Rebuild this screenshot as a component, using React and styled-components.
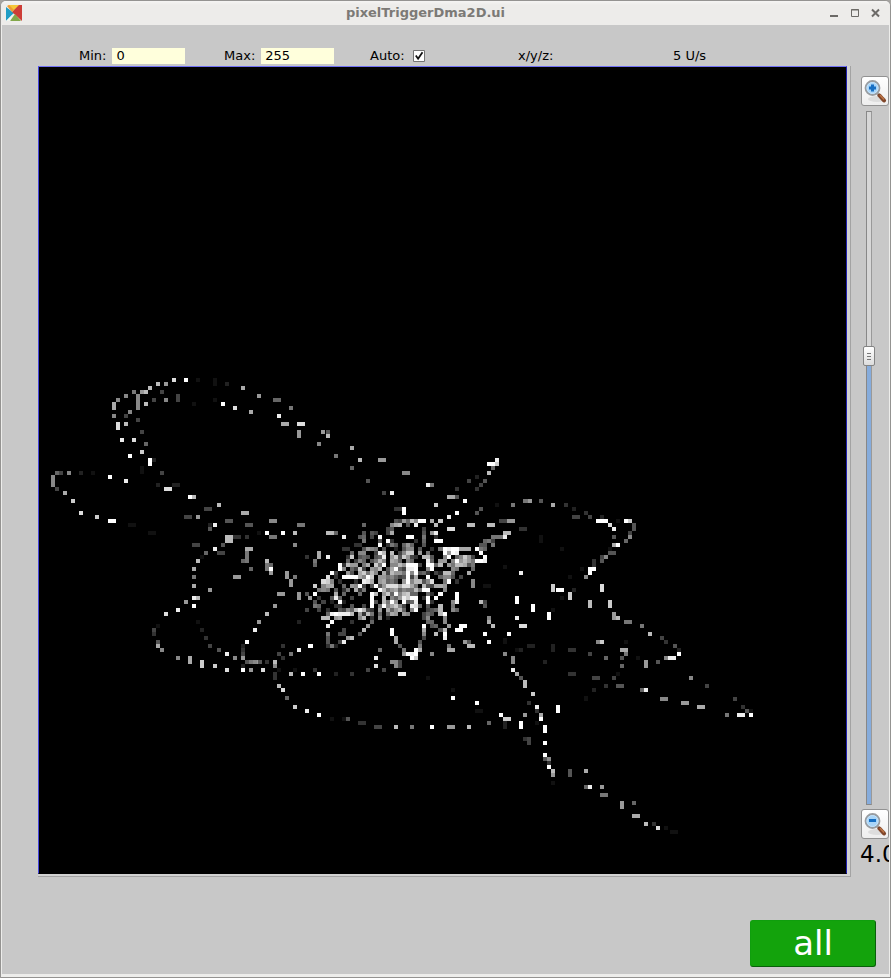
import React from "react";
import styled, { createGlobalStyle } from "styled-components";

const GlobalStyle = createGlobalStyle`
  * { box-sizing: border-box; }
  body { margin: 0; background: #a5a3a0; overflow: hidden; }
`;

const Window = styled.div`
  width: 891px;
  height: 978px;
  display: flex;
  flex-direction: column;
  overflow: hidden;
  background: #ededeb;
  border: 1px solid #949391;
  border-radius: 6px 6px 0 0;
  font: 13px/16px "DejaVu Sans", sans-serif;
  color: #000;
`;

const TitleBar = styled.header`
  flex: 0 0 24px;
  display: grid;
  grid-template-columns: 75px 1fr 116px;
  background: linear-gradient(#f5f4f3, #edecea 4px);
`;

const AppIcon = styled.svg`
  width: 16px;
  height: 16px;
  margin: 4px 0 0 5px;
`;

const Title = styled.h1`
  margin: 4px 0 0;
  padding-left: 1px;
  text-align: center;
  font-size: 13px;
  line-height: 16px;
  font-weight: bold;
  color: #7c7a76;
`;

const WindowButtons = styled.svg`
  width: 54px;
  height: 16px;
  margin: 4px 0 0 54px;
`;

const Client = styled.main`
  height: 949px;
  margin: 0 1px 0 1px;
  display: flex;
  flex-direction: column;
  background: #c8c8c8;
  overflow: hidden;
`;

const Toolbar = styled.div`
  flex: 0 0 41px;
  padding-top: 23px;
  display: grid;
  grid-template-columns: 77px 145px 146px 148px 155px 1fr;
`;

const Field = styled.label`
  display: flex;
  align-items: flex-start;
  height: 16px;
  line-height: 15px;
  white-space: nowrap;
`;

const Input = styled.input`
  width: 73px;
  height: 16px;
  margin: 0 0 0 6px;
  padding: 0 0 1px 4px;
  border: 0;
  outline: 0;
  border-radius: 0;
  background: #ffffdc;
  color: #000;
  font: 13px/15px "DejaVu Sans", sans-serif;
`;

const CheckMark = styled.svg`
  width: 12px;
  height: 12px;
  margin: 2px 0 0 8px;
`;

const Content = styled.section`
  display: flex;
  height: 812px;
  padding-left: 36px;
`;

const Frame = styled.div`
  width: 813px;
  height: 811px;
  border-right: 1px solid #a3a3a3;
  border-bottom: 1px solid #a3a3a3;
  background: #d2d2d2;
`;

const Image = styled.div`
  width: 809px;
  height: 808px;
  border: 1px solid #2020b0;
  border-top-color: #7070f4;
  border-left-color: #4444dd;
  border-bottom-color: #000;
  background: #000;
`;

const Plot = styled.svg`
  display: block;
  width: 807px;
  height: 806px;
`;

const ZoomPanel = styled.aside`
  flex: 1;
  display: flex;
  flex-direction: column;
  align-items: flex-start;
  padding: 10px 0 0 10px;
  overflow: hidden;
`;

const ZoomButton = styled.button`
  flex: 0 0 30px;
  width: 28px;
  padding: 0 0 0 1px;
  border: 1px solid #929292;
  border-radius: 3px;
  background: linear-gradient(#fff, #eee);
  svg { display: block; width: 24px; height: 24px; }
`;

const Track = styled.div`
  flex: 0 0 694px;
  width: 6px;
  margin: 5px 0 4px 5px;
  display: flex;
  flex-direction: column;
  align-items: center;
  border: 1px solid #888;
  border-right-color: #999;
  background: #d7d7d7;
`;

const Handle = styled.div`
  flex: 0 0 20px;
  width: 12px;
  margin-top: 234px;
  padding: 6px 2px 0;
  border: 1px solid #848484;
  border-radius: 2px;
  background: linear-gradient(#fff, #ddd);
  &::before {
    content: "";
    display: block;
    height: 7px;
    margin: 0 1px;
    background: repeating-linear-gradient(#777 0 1px, transparent 1px 3px);
  }
`;

const Filled = styled.div`
  flex: 1;
  width: 4px;
  background: #86acdc;
`;

const ZoomValue = styled.output`
  margin-top: 2px;
  margin-left: -1px;
  font-size: 23px;
  line-height: 27px;
  white-space: nowrap;
`;

const Footer = styled.footer`
  display: flex;
  justify-content: flex-end;
  padding: 42px 13px 0 0;
`;

const AllButton = styled.button`
  width: 126px;
  height: 47px;
  padding: 0 0 1px;
  border: 1px solid #0f9e0d;
  border-right-color: #08600a;
  border-bottom-color: #08600a;
  border-radius: 3px;
  background: #13a30c;
  color: #fff;
  font: 34px/40px "DejaVu Sans", sans-serif;
`;

/* Each patch lists samples as "x,y,level[,columns,rows]". Coordinates are
   centres in thirds of a pixel from the patch origin; levels are hex digits. */
const patches = [
  [40, 370, `402,30,d 438,30,f 354,42,b 378,42,9 330,54,b 282,66,7 306,66,9 318,66,b 366,66,4 258,78,8 294,78,8,1,4
   234,90,8 222,102,a,1,2 318,102,b 342,90,4 378,90,8 414,78,4,1,2 270,126,8 258,138,4 222,138,8 294,150,4
   234,162,d,1,2 258,162,b 306,186,4 246,210,e 282,210,d 318,222,6 306,246,c 270,258,f 330,270,f,1,2 342,270,2
   306,294,1,1,2 51,309,6 63,309,4 87,309,8 123,309,2 159,309,1 39,321,8,1,3 51,357,4 75,369,a 99,393,c
   123,429,d 171,441,c 210,453,f,2,1 210,321,f 258,333,e 366,309,4 354,345,2 402,345,2,2,1 378,357,d,2,1
   450,381,f 462,381,b 537,405,b 498,417,4,2,1 438,441,4,2,1 474,441,a 561,453,6,2,1 525,465,e 510,465,2
   510,477,6 525,30,1,1,2 561,42,2 462,102,1 525,90,1 549,102,f 585,114,c 270,465,1,2,1 474,30,1`],
  [230, 370, `39,54,a 87,78,9 15,114,d 63,126,a 135,90,6,2,1 183,114,7 147,138,e 159,162,a,2,1 207,162,d,2,1
   207,186,9,1,2 279,186,9 294,186,5 294,198,b 267,222,8 318,258,7 366,234,a 390,270,b 450,270,9,2,1 366,295,6
   414,333,5 462,369,4 486,369,e 522,309,8,2,1 594,345,f 498,417,3,2,1 522,417,f,1,2 39,429,9,2,1 123,453,7,2,1`],
  [140, 500, `237,15,b 199,27,4,2,1 309,39,a,2,1 138,51,4,2,1 174,51,9 261,63,5,2,1 225,75,e 211,87,5 321,75,5,2,1
   393,63,8,2,1 477,75,7,2,1 30,99,1,2,1 357,99,1 381,99,f 429,99,f 465,99,b 393,111,7,2,1 261,111,b,2,2
   285,111,3,2,1 321,111,3 162,135,4,2,1 249,135,5 225,147,e 198,159,6 237,159,4,2,1 186,171,1 321,147,a,2,1
   321,159,7,1,3 309,183,6 465,135,8 501,171,4 174,183,b 162,207,a 162,231,7 162,258,a 162,294,e 174,294,b
   162,318,f 211,270,9 138,306,9 114,330,e 78,342,d 333,207,6 285,231,9,2,1 381,183,b 381,195,7,1,2 393,195,6
   393,207,f 393,219,9 441,219,9,1,2 465,231,7 453,243,9,1,2 417,282,9,2,1 477,282,9,1,2 501,282,5 510,294,9
   405,318,9 381,342,b 501,330,5 477,366,2 357,366,9 345,390,e 321,426,f 174,366,1 186,390,2 198,414,3
   54,378,1 42,390,4 42,402,3 54,426,5 54,438,a 66,450,8 211,438,4 237,450,5 261,462,e 285,474,8 309,438,2
   309,450,3 309,462,4 309,474,9 114,474,8 150,474,a,1,2 186,486,c,1,2 225,498,c 261,510,d 309,498,2 309,510,f
   321,486,5 333,486,7 345,486,8 357,486,9 333,510,9 369,510,a 381,486,3 405,486,a,1,2 405,522,3,1,2
   429,438,4 417,462,6 429,474,3 453,462,7 477,450,e 510,438,f 417,510,1 465,510,1 453,522,a 489,522,f`],
  [410, 450, `261,30,e 237,42,f 249,42,f 261,42,c 249,54,6 237,69,b 201,81,2 177,93,4 225,93,5 54,105,e 66,105,7
   213,105,4 141,117,3 201,117,3 117,141,a,2,1 141,141,5 165,153,f 78,165,c 309,165,7 261,165,1 213,177,5
   201,189,5 141,189,f 117,201,e 345,153,7,2,1 297,213,9,2,1 273,213,4,2,1 333,237,3,2,1 177,225,b,2,1
   237,225,b,2,1 333,369,e 285,351,1 225,408,1,2,1 321,444,f,1,2 321,504,e 369,468,f,1,2 333,528,d,2,1
   297,552,f 285,570,1 285,612,7 309,624,9 321,600,2 333,600,3 357,588,2,2,1 237,504,8 237,516,a 249,528,b
   225,552,f 237,576,f 213,456,b 225,456,4 225,468,5 189,393,8 189,405,8 165,576,8 177,576,5 177,588,b,2,1`],
  [530, 490, `0,33,9 33,33,5 69,45,a 108,45,3 132,57,2 168,69,3 132,81,4,2,1 180,81,4 216,81,2 204,93,f,3,1 240,105,d
   252,117,e 252,141,5 264,93,1 288,93,f 300,93,c 312,105,5,1,2 300,129,4 300,141,8 288,153,6 252,165,a
   264,165,f 240,177,1 240,189,5,2,1 228,201,8 216,201,4 216,213,5 192,213,3,1,2 180,237,f 192,237,f
   180,249,f 168,261,8 156,237,1 33,141,1,1,2 96,177,1 120,261,1 69,288,c,1,2 84,300,f,2,1 132,300,2
   216,288,d,1,2 96,324,1 120,312,c,1,2 180,336,b,1,2 240,336,c,1,2 9,348,f,1,2 57,372,f,1,2 69,360,1
   252,372,9,1,2 264,384,b 288,396,7,2,1 336,408,7 360,432,b 396,444,4 408,456,3 435,468,5 447,480,2
   447,492,f 408,504,8 420,504,e,2,1 384,516,5 348,516,9,1,2 324,504,1 204,456,8 216,456,c 288,456,1
   276,480,a,2,1 288,492,7 276,504,5 276,528,6 180,492,4 228,504,6 69,468,3,1,2 120,480,4,2,1 45,516,1
   6,468,1 120,552,3,2,1 192,564,4,2,1 252,564,4 264,552,1 228,588,3 264,588,5,2,1 192,600,2 168,626,1
   336,600,6 348,600,e 396,626,8,2,1 459,639,9,2,1 507,651,a,2,1 483,564,8 531,588,4 615,626,4 639,651,3
   651,663,5 663,675,f 627,675,e,2,1 591,675,7 663,663,1 84,651,f,1,2`],
  [260, 640, `69,18,3 117,30,e 153,18,f 93,42,7 57,42,4 69,54,3 45,66,b 45,78,8 9,90,d 0,66,5 21,66,3 45,102,3,1,2
   57,138,b 69,150,d 81,175,6 105,201,c 141,213,e 177,225,f 93,102,b 105,90,1 129,102,e 165,90,3 177,102,f
   228,102,1 276,102,2 324,90,6 372,90,4 348,54,e 348,78,e 360,30,7 204,18,7 216,18,3 228,18,2 252,6,f
   216,237,1 252,237,1 264,237,5 300,249,3,2,1 348,261,4,2,1 408,261,b 456,261,7 516,261,f 567,261,9,2,1
   627,261,b 687,249,6 723,225,f 735,237,c,2,1 735,249,2,1,2 783,249,f,1,2 795,225,9 795,297,3 807,297,4,1,2
   504,114,1 578,150,1 579,175,f 651,189,f 651,213,1,2,1 420,102,e,2,1 408,66,8,1,2 420,66,4,1,2
   408,6,b 420,18,4 432,30,8,1,2 444,42,c 456,54,f 468,30,f,1,2 480,18,b,1,2 468,54,6 516,42,8
   567,18,8 567,30,b,2,1 615,6,9 627,18,b,2,1 687,6,f 735,42,8 759,54,8,1,2 759,90,e 771,102,a 783,114,5
   795,126,b,1,2 819,162,c 807,189,3 831,201,e 831,213,3 843,225,a 843,237,f 831,249,1 855,261,f,1,2
   855,309,f 855,345,f 855,357,5 867,357,8 867,369,3 867,381,f 880,393,b 880,405,9 880,429,1
   894,201,f,1,2 930,393,5,1,2 978,393,a 978,441,6 990,441,e 1026,441,9 1026,465,7,2,1 1086,489,9,1,2
   1122,489,6 1122,528,a,2,1 1158,552,b 1182,552,3 1194,564,d 1218,564,1 1236,576,1,2,1
   735,6,1 771,30,1 783,30,2 808,18,2,2,1 855,66,2 880,18,2,1,2 930,30,3,2,1 930,102,3,2,1 978,175,1`],
];

/* The dense core is stored row by row: a dot is an empty cell. */
const coreLeft = [
  ".......................33f...",
  ".........................f...",
  ".............................",
  ".......................549678",
  "0..............6......8ab.5.e",
  ".....................45......",
  "......bb6......5.54..4a......",
  "..........e...56.4.f......ff.",
  "...............7...5.f3.....3",
  ".............33....f.375.695.",
  "..........33...5987.5..2.588.",
  "....a.......6.88..4eb.b.48c4.",
  ".3..a.e....3c.565.56e.9c5c943",
  "...7.......6.486.57b8.a96.8..",
  "...6.....f3b99.7a.c7f.88b9fdf",
  ".........f8.64c4.98b.5af64e9f",
  ".......f4..95.ac7b8.a4b997f89",
  "......d.3.ffffa8fc.9978645f6b",
  ".....dc8.3...3.eda.9a675.9f9c",
  "...c.8aa..6.98f4.5f59dddaddc.",
  "....787.5.37.a37...fb79a687b4",
  "...f....a.6...6..fb.9c6f8bc79",
  "....3..5e6..4....f..b.869ecff",
  "...5.4.2.f2......f5.b7f9.f59e",
  "...76...33..5..4.f.7f8ac84.9a",
  ".4..4.3..5486beb43.9.a69b6.8f",
  "......6efeeeb.93b7.6.6a9.98..",
  ".....bb.9a....8b.3.8.2.......",
  ".......f....3....6...........",
  "......e.........9............",
  "..........4....b......f......",
  "......7..44...5.......f......",
  "......5....9b..........a.....",
  "......5..4e............a.....",
  "..f...37................5....",
  "...................6.....7..c",
  ".........................9f.b",
  "..................e.........c",
  "......................8......",
  "..................d..........",
  "...3............4............",
  "f...f...2...3...........ee...",
];

const coreRight = [
  "b.ff.a.c..............",
  ".e....b..............." ,
  "...4.....dd............",
  "...5.9e................bb",
  "f..7..3.............777e",
  "...6..ff..........674..",
  "6..5.............55.7",
  "8.5..3.7feffaaa.f76",
  "c.9.7...f9fe.....f.",
  "4..bb5..8f.68c94..f",
  "6...e6.99.8f9b97ffe",
  "ff4.ff6b.97bba57",
  "ef..8f....87...6",
  ".f563.42bb6...a",
  "4a..f..6885.4",
  "8bb58d..7f.3...8",
  "a7.b54aa9......8",
  "7b7ff...8",
  "66..63.f...f",
  "ff.3f.f....f",
  "6...f3....8e",
  "ed6.5..b..7",
  ".f..456b..86",
  "...465.bf",
  "...48...8",
  "....66..8",
  "...f.56..9..ff",
  "...a...5b..ff",
  "...8..b.f",
  "...4....e",
  "..5",
  "..7......7",
  ".fa......aa",
  "ef...8",
  "f",
];

const level = (digit) => {
  const v = parseInt(digit, 16) * 17;
  return `rgb(${v},${v},${v})`;
};

const SamplePatch = ({ patch: [x, y, text] }) => (
  <g transform={`translate(${x} ${y}) scale(${1 / 3})`}>
    {text.trim().split(/\s+/).map((entry, i) => {
      const [cx, cy, tone, w = 1, h = 1] = entry.split(",");
      return <rect key={i} x={cx - 6} y={cy - 6} width={12 * w} height={12 * h} fill={level(tone)} />;
    })}
  </g>
);

const SampleRows = ({ rows, x, y, wideColumn, wideRow }) => (
  <g transform={`translate(${x} ${y})`}>
    {rows.flatMap((row, j) =>
      [...row].map((tone, i) =>
        tone === "." || tone === "0" ? null : (
          <rect
            key={`${i}-${j}`}
            x={i * 4 + (i >= wideColumn ? 1 : 0)}
            y={j * 4 + (j >= wideRow ? 1 : 0)}
            width={i === wideColumn - 1 ? 5 : 4}
            height={j === wideRow - 1 ? 5 : 4}
            fill={level(tone)}
          />
        )
      )
    )}
  </g>
);

const Magnifier = ({ plus }) => (
  <svg viewBox="0 0 24 24">
    <ellipse cx="14" cy="20" rx="9" ry="3" fill="#ddd" />
    <path d="M14 14l2.5 2.5" stroke="#aaa" strokeWidth="3" />
    <path d="M16.5 16.5l4.5 5" stroke="#80462a" strokeWidth="4" strokeLinecap="round" />
    <path d="M17 16l4 4.6" stroke="#bd7546" strokeWidth="1.5" />
    <circle cx="9.5" cy="9" r="7" fill="#a9d5f8" stroke="#999da1" strokeWidth="1.8" />
    <circle cx="9.5" cy="9" r="5.5" fill="none" stroke="#c5e3fa" />
    <path d={plus ? "M9.5 5.5v7M6 9h7" : "M6 8.5h7"} stroke="#176fc3" strokeWidth="3" />
  </svg>
);

export default function App() {
  return (
    <>
      <GlobalStyle />
      <Window>
        <TitleBar>
          <AppIcon viewBox="0 0 16 16">
            <path d="M0 2v14L8 8z" fill="#209dc5" />
            <path d="M2 0h12L7 6z" fill="#f5c737" />
            <path d="M16 0v16L6 7 13 0z" fill="#cd3d37" />
            <path d="M4 16h11L9 9z" fill="#83a84a" />
            <path d="M0 16l7-7-3 7z" fill="#f2f7ef" />
            <path d="M1 1l5 6 2-2-5-5z" fill="#ef9b34" />
          </AppIcon>
          <Title>pixelTriggerDma2D.ui</Title>
          <WindowButtons viewBox="0 0 54 16" fill="none" stroke="#6c6a67">
            <path d="M2 11h8" strokeWidth="2" />
            <path d="M23.5 4.5h7v7h-7z M23 5h8" />
            <path d="M44 4.5l7 7M51 4.5l-7 7" strokeWidth="2" />
          </WindowButtons>
        </TitleBar>
        <Client>
          <Toolbar>
            <span />
            <Field>Min:<Input defaultValue="0" /></Field>
            <Field>Max:<Input defaultValue="255" /></Field>
            <Field>
              Auto:
              <CheckMark viewBox="0 0 12 12">
                <path d="M.5.5h11v11H.5z" fill="#fff" stroke="#747474" />
                <path d="M2.8 5.5l2.3 3.2L9.5 2.3" fill="none" stroke="#111" strokeWidth="1.8" />
              </CheckMark>
            </Field>
            <Field>x/y/z:</Field>
            <Field>5 U/s</Field>
          </Toolbar>
          <Content>
            <Frame>
              <Image>
                <Plot viewBox="39 67 807 806" shapeRendering="crispEdges">
                  {patches.map((patch, i) => <SamplePatch key={i} patch={patch} />)}
                  <SampleRows rows={coreLeft} x={301} y={507} wideColumn={6} wideRow={19} />
                  <SampleRows rows={coreRight} x={410} y={519} wideColumn={8} wideRow={16} />
                </Plot>
              </Image>
            </Frame>
            <ZoomPanel>
              <ZoomButton aria-label="Zoom in"><Magnifier plus /></ZoomButton>
              <Track><Handle /><Filled /></Track>
              <ZoomButton aria-label="Zoom out"><Magnifier /></ZoomButton>
              <ZoomValue>4.0</ZoomValue>
            </ZoomPanel>
          </Content>
          <Footer><AllButton>all</AllButton></Footer>
        </Client>
      </Window>
    </>
  );
}
